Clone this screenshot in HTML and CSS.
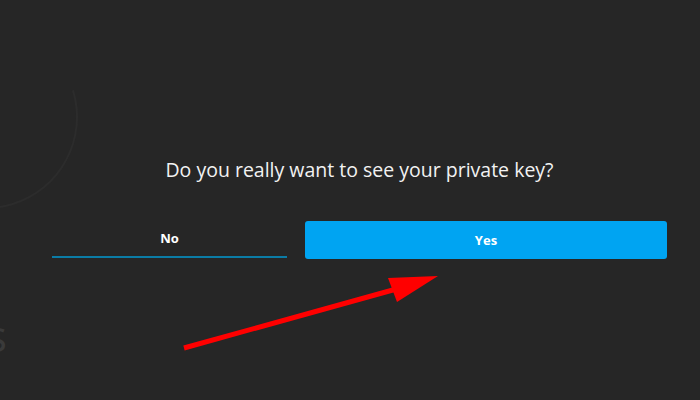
FILE: index.html
```html
<!DOCTYPE html>
<html>
<head>
<meta charset="utf-8">
<link rel="stylesheet" href="styles.css">
</head>
<body>
<div class="page">
  <div class="ring"></div>
  <div class="ghost">s</div>
  <div class="dialog">
    <p class="question">Do you really want to see your private key?</p>
    <div class="actions">
      <button class="btn btn-no">No</button>
      <button class="btn btn-yes">Yes</button>
    </div>
  </div>
  <svg class="arrow" width="700" height="400" viewBox="0 0 700 400">
    <line x1="184" y1="348" x2="400" y2="288" stroke="#ff0000" stroke-width="5" stroke-linecap="butt"/>
    <polygon points="438,276 388,278 397,302" fill="#ff0000"/>
  </svg>
</div>
</body>
</html>
```
FILE: styles.css
```css
html, body {
  margin: 0;
  padding: 0;
  background: #262626;
}
.page {
  position: relative;
  width: 700px;
  height: 400px;
  overflow: hidden;
  font-family: "Open Sans", "Noto Sans", sans-serif;
}
.ring {
  position: absolute;
  left: -106px;
  top: 25px;
  width: 180px;
  height: 180px;
  border-radius: 50%;
  border: 2px solid;
  border-color: transparent #2c2c2c #2c2c2c transparent;
  transform: rotate(28deg);
}
.ghost {
  position: absolute;
  left: -14px;
  top: 310px;
  font-size: 44px;
  line-height: 50px;
  color: #3a3a3a;
  font-family: "Open Sans", sans-serif;
}
.dialog {
  padding: 157px 33px 0 52px;
}
.question {
  margin: 0 0 38px 0;
  text-align: center;
  width: 615px;
  color: #f2f2f2;
  font-size: 19.5px;
  font-weight: 500;
  line-height: 26px;
}
.actions {
  display: flex;
  gap: 18px;
  align-items: flex-end;
}
.btn {
  font-family: "Open Sans", sans-serif;
  font-weight: 700;
  font-size: 13px;
  color: #ffffff;
  border: none;
  padding: 0;
  cursor: pointer;
}
.btn-no {
  width: 235px;
  height: 37px;
  background: transparent;
  border-bottom: 2px solid #0b7ca6;
  padding-bottom: 2px;
  margin-bottom: 1px;
}
.btn-yes {
  width: 362px;
  height: 38px;
  background: #00a4f2;
  border-radius: 3px;
}
.arrow {
  position: absolute;
  left: 0;
  top: 0;
}
```
